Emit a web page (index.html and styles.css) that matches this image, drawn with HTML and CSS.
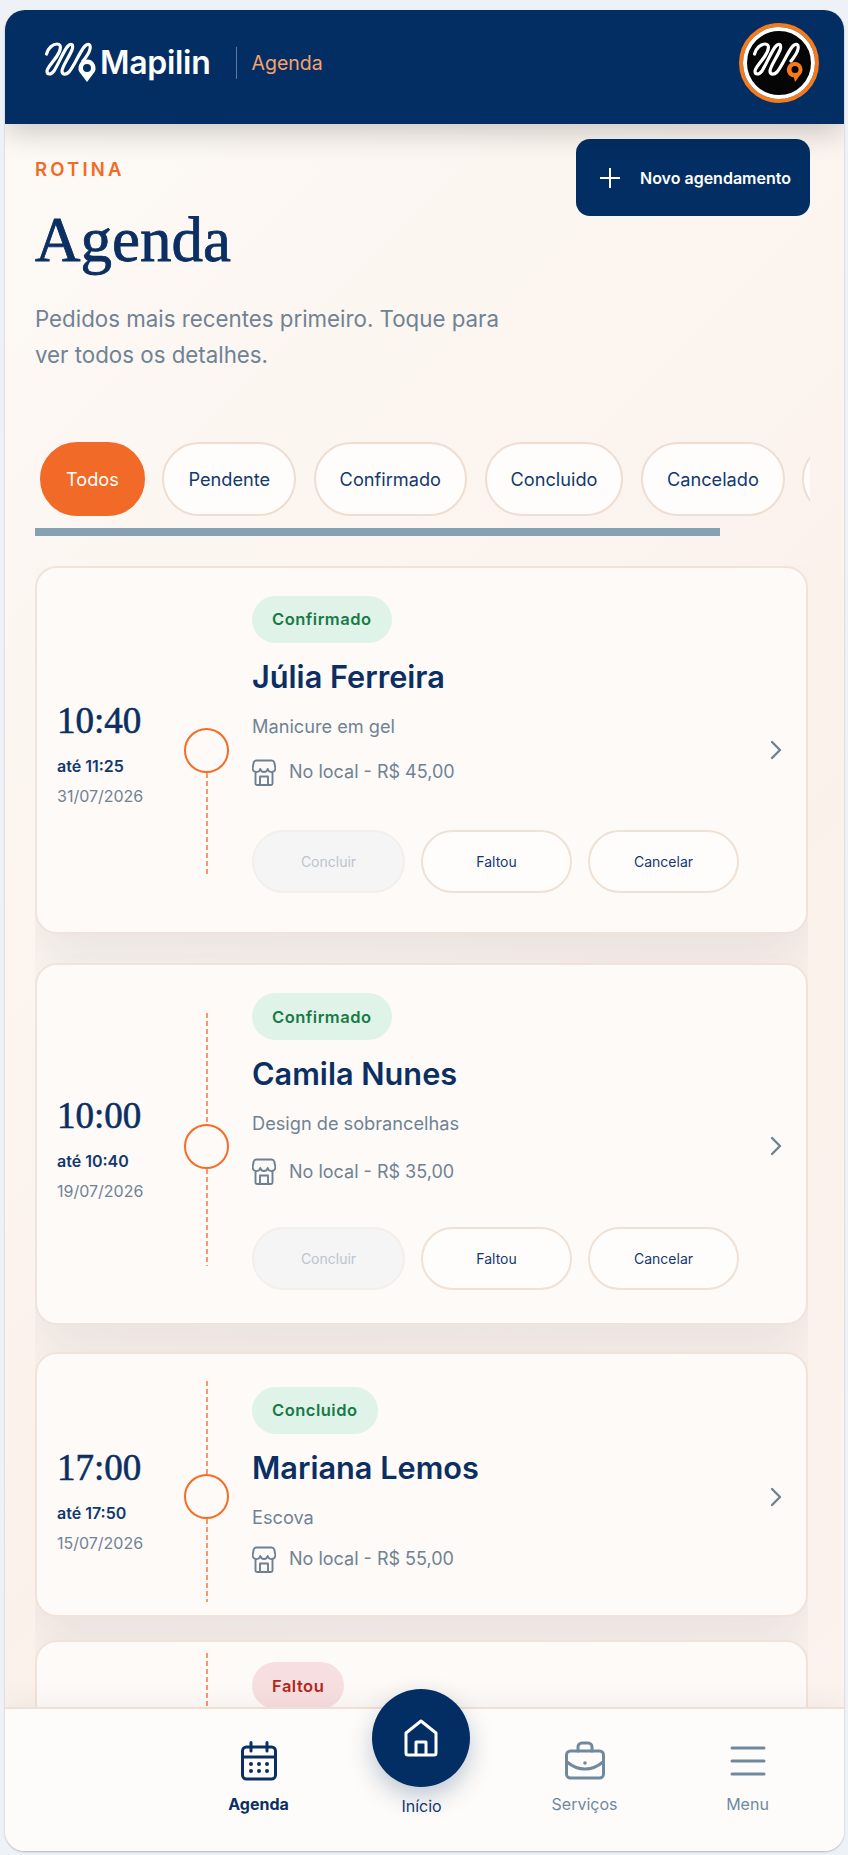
FILE: index.html
```html
<!DOCTYPE html>
<html lang="pt-BR">
<head>
<meta charset="utf-8">
<title>Agenda - Mapilin</title>
<link rel="stylesheet" href="styles.css">
</head>
<body>
<div class="app">
  <header class="topbar">
    <div class="brand">
      <svg class="logo" viewBox="0 0 54 42" width="54" height="42" aria-hidden="true">
        <path class="logo-line" d="M2.500 12C4 6 9 2 13 2C18 2 17 8 13 14C9 20 3 26 3 29C3 33 7 33 10 29C15 21 20 8 24 4C27 1 30 2 28 8C25 15 18 25 18 29C18 33 22 33 25 30C31 23 36 9 41 4C44 1 47 2 46 7C45 12 42 15 39 19"/>
        <path class="logo-pin" fill-rule="evenodd" d="M43 17.500a8.500 8.500 0 0 1 6 14.500L43 40l-6-8A8.500 8.500 0 0 1 43 17.500zM43 22a4 4 0 1 0 0 8a4 4 0 0 0 0-8z"/>
      </svg>
      <span class="brand-name">Mapilin</span>
      <span class="brand-sep"></span>
      <span class="brand-page">Agenda</span>
    </div>
    <div class="avatar">
      <svg viewBox="0 0 54 42" width="54" height="42" aria-hidden="true">
        <path class="logo-line" d="M2.500 12C4 6 9 2 13 2C18 2 17 8 13 14C9 20 3 26 3 29C3 33 7 33 10 29C15 21 20 8 24 4C27 1 30 2 28 8C25 15 18 25 18 29C18 33 22 33 25 30C31 23 36 9 41 4C44 1 47 2 46 7C45 12 42 15 39 19"/>
        <path class="avatar-pin" fill-rule="evenodd" d="M43 20a7.500 7.500 0 0 1 5.500 12.500L43 40l-1-4.500a7.500 7.500 0 0 1 1-15.500zM43 24a3.500 3.500 0 1 0 0 7a3.500 3.500 0 0 0 0-7z"/>
      </svg>
    </div>
  </header>

  <main class="content">
    <section class="head">
      <div class="head-text">
        <p class="eyebrow">ROTINA</p>
        <h1 class="title">Agenda</h1>
        <p class="subtitle">Pedidos mais recentes primeiro. Toque para ver todos os detalhes.</p>
      </div>
      <button class="new-btn" type="button">
        <svg viewBox="0 0 20 20" width="20" height="20" aria-hidden="true"><path d="M10 0v20M0 10h20"/></svg>
        <span>Novo agendamento</span>
      </button>
    </section>

    <nav class="chips">
      <span class="chip chip-on">Todos</span>
      <span class="chip">Pendente</span>
      <span class="chip">Confirmado</span>
      <span class="chip">Concluido</span>
      <span class="chip">Cancelado</span>
      <span class="chip">Faltou</span>
    </nav>
    <div class="scrollbar"></div>

    <div class="list">
      <article class="card card-a">
        <div class="when">
          <div class="time">10:40</div>
          <div class="until">até 11:25</div>
          <div class="date">31/07/2026</div>
        </div>
        <div class="rail">
          <span class="line line-a line-none"></span>
          <span class="dot"></span>
          <span class="line line-a"></span>
        </div>
        <div class="info">
          <span class="badge badge-ok">Confirmado</span>
          <h2 class="name">Júlia Ferreira</h2>
          <p class="service">Manicure em gel</p>
          <p class="place">
            <svg class="store" viewBox="0 0 24 27" width="24" height="27" aria-hidden="true"><path d="M3.500 13v11.500a1.500 1.500 0 0 0 1.500 1.500h14a1.500 1.500 0 0 0 1.500-1.500V13M4.500 1.500h15a3 3 0 0 1 2.800 2l1 5a3.800 3.800 0 0 1-7.600 1.500 3.800 3.800 0 0 1-7.400 0 3.800 3.800 0 0 1-7.600-1.500l1-5a3 3 0 0 1 2.800-2zM8 26v-8.500h8v8.500"/></svg>
            <span>No local - R$ 45,00</span>
          </p>
          <div class="actions">
            <span class="act act-off">Concluir</span>
            <span class="act">Faltou</span>
            <span class="act">Cancelar</span>
          </div>
        </div>
        <svg class="chev" viewBox="0 0 12 20" width="12" height="20" aria-hidden="true"><path d="M2 2l8 8-8 8"/></svg>
      </article>

      <article class="card card-b">
        <div class="when">
          <div class="time">10:00</div>
          <div class="until">até 10:40</div>
          <div class="date">19/07/2026</div>
        </div>
        <div class="rail">
          <span class="line line-b-top"></span>
          <span class="dot"></span>
          <span class="line line-b-bottom"></span>
        </div>
        <div class="info">
          <span class="badge badge-ok">Confirmado</span>
          <h2 class="name">Camila Nunes</h2>
          <p class="service">Design de sobrancelhas</p>
          <p class="place">
            <svg class="store" viewBox="0 0 24 27" width="24" height="27" aria-hidden="true"><path d="M3.500 13v11.500a1.500 1.500 0 0 0 1.500 1.500h14a1.500 1.500 0 0 0 1.500-1.500V13M4.500 1.500h15a3 3 0 0 1 2.800 2l1 5a3.800 3.800 0 0 1-7.600 1.500 3.800 3.800 0 0 1-7.400 0 3.800 3.800 0 0 1-7.600-1.500l1-5a3 3 0 0 1 2.800-2zM8 26v-8.500h8v8.500"/></svg>
            <span>No local - R$ 35,00</span>
          </p>
          <div class="actions">
            <span class="act act-off">Concluir</span>
            <span class="act">Faltou</span>
            <span class="act">Cancelar</span>
          </div>
        </div>
        <svg class="chev" viewBox="0 0 12 20" width="12" height="20" aria-hidden="true"><path d="M2 2l8 8-8 8"/></svg>
      </article>

      <article class="card card-c">
        <div class="when">
          <div class="time">17:00</div>
          <div class="until">até 17:50</div>
          <div class="date">15/07/2026</div>
        </div>
        <div class="rail">
          <span class="line line-c-top"></span>
          <span class="dot"></span>
          <span class="line line-c-bottom"></span>
        </div>
        <div class="info">
          <span class="badge badge-ok">Concluido</span>
          <h2 class="name">Mariana Lemos</h2>
          <p class="service">Escova</p>
          <p class="place">
            <svg class="store" viewBox="0 0 24 27" width="24" height="27" aria-hidden="true"><path d="M3.500 13v11.500a1.500 1.500 0 0 0 1.500 1.500h14a1.500 1.500 0 0 0 1.500-1.500V13M4.500 1.500h15a3 3 0 0 1 2.800 2l1 5a3.800 3.800 0 0 1-7.600 1.500 3.800 3.800 0 0 1-7.400 0 3.800 3.800 0 0 1-7.600-1.500l1-5a3 3 0 0 1 2.800-2zM8 26v-8.500h8v8.500"/></svg>
            <span>No local - R$ 55,00</span>
          </p>
        </div>
        <svg class="chev" viewBox="0 0 12 20" width="12" height="20" aria-hidden="true"><path d="M2 2l8 8-8 8"/></svg>
      </article>

      <article class="card card-d">
        <div class="when"></div>
        <div class="rail rail-d">
          <span class="line line-d"></span>
        </div>
        <div class="info">
          <span class="badge badge-no">Faltou</span>
        </div>
      </article>
    </div>
  </main>

  <footer class="tabbar">
    <a class="tab tab-on">
      <svg viewBox="0 0 36 40" width="36" height="40" aria-hidden="true">
        <rect x="1.500" y="6" width="33" height="32" rx="4"/>
        <path d="M1.500 16h33M10 1.500V10M26 1.500V10"/>
        <g class="tab-dots"><circle cx="10" cy="23" r="2"/><circle cx="18" cy="23" r="2"/><circle cx="26" cy="23" r="2"/><circle cx="10" cy="30" r="2"/><circle cx="18" cy="30" r="2"/><circle cx="26" cy="30" r="2"/></g>
      </svg>
      <span>Agenda</span>
    </a>
    <a class="tab tab-home">
      <span>Início</span>
    </a>
    <a class="tab">
      <svg viewBox="0 0 40 40" width="40" height="40" aria-hidden="true">
        <rect x="1.500" y="10" width="37" height="27" rx="4"/>
        <path d="M13 10V6a4 4 0 0 1 4-4h6a4 4 0 0 1 4 4v4M2 21c6 5 12 7 18 7s12-2 18-7"/>
        <circle class="tab-fill" cx="20" cy="22" r="1.800"/>
      </svg>
      <span>Serviços</span>
    </a>
    <a class="tab">
      <svg viewBox="0 0 36 40" width="36" height="40" aria-hidden="true"><path d="M2 7h32M2 20h32M2 33h32"/></svg>
      <span>Menu</span>
    </a>
    <span class="fab">
      <svg viewBox="0 0 36 38" width="36" height="38" aria-hidden="true"><path d="M18 2 33 14v20a2 2 0 0 1-2 2H5a2 2 0 0 1-2-2V14zM13 36V23h10v13"/></svg>
    </span>
  </footer>
</div>
</body>
</html>
```

FILE: styles.css
```css
* { box-sizing: border-box; }
html, body { margin: 0; height: 100%; }
body {
  background: #eef1f6;
  font-family: "Inter", "Liberation Sans", sans-serif;
  padding: 10px 4px 4px 5px;
  overflow: hidden;
}
p, h1, h2 { margin: 0; }
.app {
  height: 1841px;
  display: flex;
  flex-direction: column;
  border-radius: 20px;
  overflow: hidden;
  background: linear-gradient(135deg, #fdfaf6 0%, #fbf1eb 60%, #fcf3ee 100%);
  box-shadow: 0 1px 2px rgba(0, 0, 0, .25);
}
.topbar {
  flex: 0 0 114px;
  position: relative;
  z-index: 2;
  background: #032e63;
  display: flex;
  align-items: center;
  justify-content: space-between;
  padding: 0 25px 8px 39px;
  box-shadow: 0 8px 28px rgba(0, 0, 0, .2);
}
.brand { display: flex; align-items: center; }
.logo { display: block; }
.logo-line { fill: none; stroke: #fff; stroke-width: 3.2; stroke-linecap: round; stroke-linejoin: round; }
.logo-pin { fill: #fff; }
.avatar-pin { fill: #f47a1c; }
.brand-name {
  color: #fff;
  font-size: 32px;
  font-weight: 600;
  letter-spacing: -.3px;
  margin-left: 2px;
  line-height: 42px;
}
.brand-sep { width: 1px; height: 32px; background: #5a7a9f; margin: 0 14px 0 26px; }
.brand-page { color: #f7a26d; font-size: 19.500px; }
.avatar {
  flex: none;
  width: 80px;
  height: 80px;
  border-radius: 50%;
  background: #050505;
  border: 4px solid #f47a1c;
  outline: 4px solid #fff;
  outline-offset: -8px;
  display: flex;
  align-items: center;
  justify-content: center;
}
.content {
  flex: 1;
  min-height: 0;
  overflow: hidden;
  padding: 15px 34px 0 30px;
}
.head { display: flex; justify-content: space-between; align-items: flex-start; height: 303px; }
.head-text { width: 480px; padding-top: 16px; }
.eyebrow { color: #f26b24; font-size: 18.500px; font-weight: 600; letter-spacing: 3.200px; line-height: 28px; }
.title {
  color: #0b2f62;
  font-family: "Liberation Serif", serif;
  font-weight: 400;
  font-size: 63px;
  line-height: 70px;
  margin-top: 22px;
  -webkit-text-stroke: .8px #0b2f62;
}
.subtitle { color: #6f8394; font-size: 22.300px; line-height: 36px; margin-top: 26px; }
.new-btn {
  flex: none;
  width: 234px;
  height: 77px;
  background: #032e63;
  color: #fff;
  border: 0;
  border-radius: 14px;
  display: flex;
  align-items: center;
  gap: 20px;
  padding: 0 0 0 24px;
  font: 600 16px "Inter", sans-serif;
}
.new-btn svg { fill: none; stroke: #fff; stroke-width: 2; }
.chips { display: flex; gap: 17.500px; overflow: hidden; padding-left: 5px; }
.chip {
  flex: none;
  height: 74px;
  padding: 0 24px;
  border: 2px solid #eeddd0;
  border-radius: 37px;
  background: #fffdfb;
  color: #12396f;
  font-size: 18.200px;
  display: flex;
  align-items: center;
}
.chip-on { background: #f26a27; border-color: #f26a27; color: #fff; }
.scrollbar { width: 685px; height: 8px; margin-top: 12px; background: #86a0b4; }
.list { margin: 30px 2px 0 0; overflow: hidden; height: 1150px; }
.card {
  position: relative;
  background: #fefaf7;
  border: 2px solid #f1e3d8;
  border-radius: 22px;
  box-shadow: 0 30px 50px rgba(40, 70, 90, .08);
  display: flex;
  align-items: center;
}
.card-a { height: 368px; margin-bottom: 29px; }
.card-b { height: 362px; margin-bottom: 27px; }
.card-c { height: 265px; margin-bottom: 23px; }
.card-d { height: 300px; align-items: flex-start; }
.when { width: 115px; margin-left: 20px; flex: none; }
.card-a .when { margin-top: 6px; }
.card-b .when { margin-top: 9px; }
.card-c .when { margin-top: 31px; }
.time { color: #0b2f62; font-family: "Liberation Serif", serif; font-size: 37px; line-height: 44px; -webkit-text-stroke: .6px #0b2f62; }
.until { color: #12396f; font-size: 16px; font-weight: 600; line-height: 24px; margin-top: 11px; }
.date { color: #6f8394; font-size: 16px; line-height: 24px; margin-top: 6px; }
.rail { width: 45px; flex: none; display: flex; flex-direction: column; align-items: center; margin-left: 12px; }
.card-b .rail { margin-bottom: 10px; }
.card-c .rail { margin-top: 13px; }
.rail-d { margin-top: 11px; }
.dot { width: 45px; height: 45px; flex: none; border: 2px solid #f46d27; border-radius: 50%; background: #fefaf7; }
.line { width: 2px; background: repeating-linear-gradient(to bottom, #f6986d 0 5px, transparent 5px 8px); }
.line-none { background: none; }
.line-a { height: 101px; }
.line-b-top { height: 111px; }
.line-b-bottom { height: 97px; }
.line-c-top { height: 93px; }
.line-c-bottom { height: 83px; }
.line-d { height: 60px; }
.info { margin-left: 23px; flex: 1; display: flex; flex-direction: column; align-items: flex-start; }
.card-a .info { margin-bottom: 12px; }
.card-b .info { margin-bottom: 5px; }
.card-c .info { margin-bottom: 10px; }
.card-d .info { padding-top: 20px; }
.badge {
  height: 47px;
  padding: 0 20px;
  border-radius: 24px;
  font-size: 16.500px;
  font-weight: 600;
  letter-spacing: .5px;
  display: flex;
  align-items: center;
}
.badge-ok { background: #e0f3e8; color: #177a48; }
.badge-no { background: #f7dfe0; color: #b3261e; }
.name { color: #0b2f62; font-size: 30.700px; font-weight: 600; line-height: 38px; margin-top: 15px; }
.service { color: #6f8394; font-size: 18.200px; line-height: 26px; margin-top: 17px; }
.place { color: #6f8394; font-size: 18px; line-height: 26px; margin-top: 20px; display: flex; align-items: center; gap: 13px; }
.card-b .place { margin-top: 22px; }
.card-c .place { margin-top: 16px; }
.store { fill: none; stroke: #6b8093; stroke-width: 1.900; stroke-linejoin: round; }
.actions { display: flex; gap: 16px; margin-top: 44px; }
.card-b .actions { margin-top: 42px; }
.act {
  width: 151px;
  height: 63px;
  border: 2px solid #f0e1d5;
  border-radius: 32px;
  background: #fffdfb;
  color: #12396f;
  font-size: 14px;
  display: flex;
  align-items: center;
  justify-content: center;
}
.act-off { width: 153px; background: #f5f5f5; border-color: #f3efeb; color: #bcc4ce; }
.chev { margin-right: 24px; flex: none; fill: none; stroke: #6f8394; stroke-width: 2.400; stroke-linecap: round; stroke-linejoin: round; }
.card-b .chev { margin-top: 4px; }
.card-c .chev { margin-top: 24px; }
.tabbar {
  flex: 0 0 144px;
  position: relative;
  z-index: 3;
  background: #fefcfa;
  border-top: 2px solid #f0e0d3;
  box-shadow: 0 -8px 24px rgba(0, 0, 0, .04);
  display: grid;
  grid-template-columns: repeat(4, 163px);
  padding-left: 172px;
  padding-bottom: 37px;
}
.tab { display: flex; flex-direction: column; align-items: center; justify-content: flex-end; gap: 13px; color: #6f8a9f; font-size: 16px; line-height: 20px; }
.tab svg { fill: none; stroke: #6f8a9f; stroke-width: 3; stroke-linecap: round; stroke-linejoin: round; }
.tab .tab-fill { fill: #6f8a9f; stroke: none; }
.tab-on { color: #0b2f62; font-weight: 700; }
.tab-on svg { stroke: #0b2f62; }
.tab-on .tab-dots { fill: #0b2f62; stroke: none; }
.tab-home { color: #12396f; transform: translateY(2px); }
.fab {
  position: absolute;
  left: 367px;
  top: -20px;
  width: 98px;
  height: 98px;
  border-radius: 50%;
  background: #032e63;
  box-shadow: 0 10px 24px rgba(3, 46, 99, .25);
  display: flex;
  align-items: center;
  justify-content: center;
}
.fab svg { fill: none; stroke: #fff; stroke-width: 3; stroke-linejoin: round; }
```
